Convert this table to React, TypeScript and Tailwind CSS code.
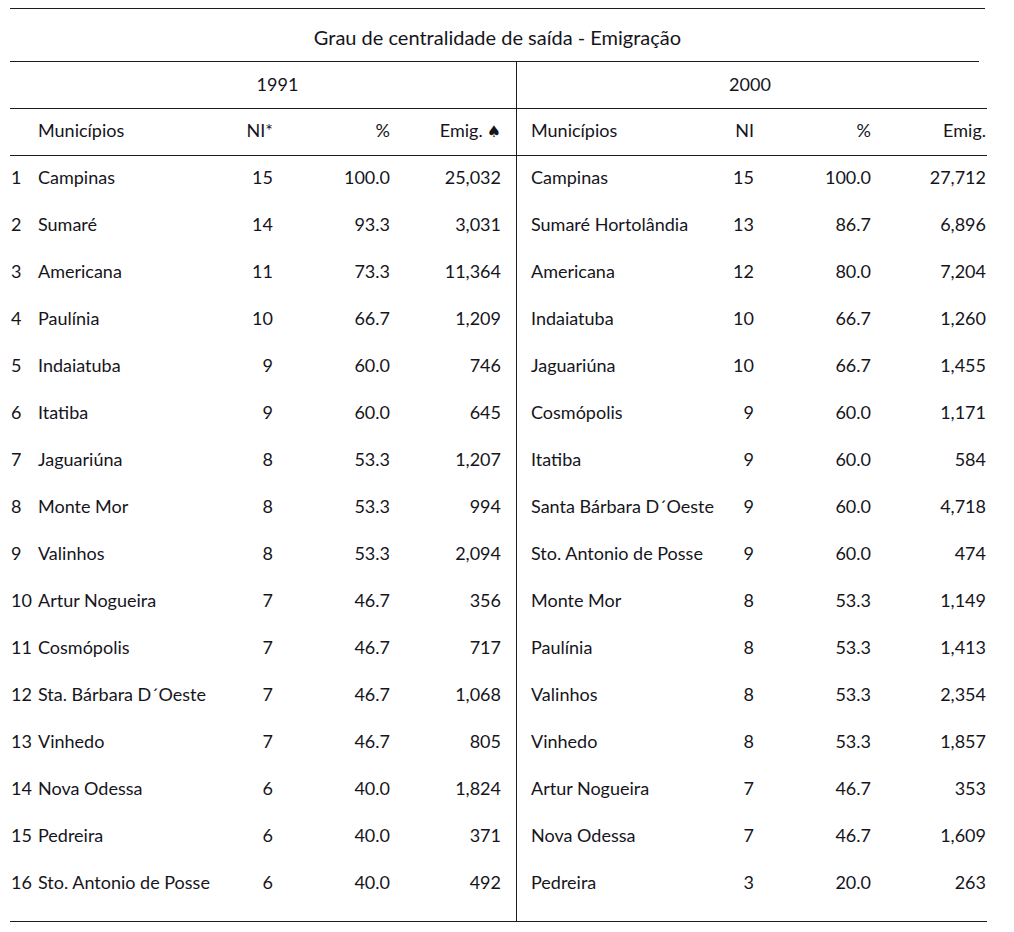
import React from "react";

const left: [string, string, string, string][] = [
  ["Campinas", "15", "100.0", "25,032"],
  ["Sumaré", "14", "93.3", "3,031"],
  ["Americana", "11", "73.3", "11,364"],
  ["Paulínia", "10", "66.7", "1,209"],
  ["Indaiatuba", "9", "60.0", "746"],
  ["Itatiba", "9", "60.0", "645"],
  ["Jaguariúna", "8", "53.3", "1,207"],
  ["Monte Mor", "8", "53.3", "994"],
  ["Valinhos", "8", "53.3", "2,094"],
  ["Artur Nogueira", "7", "46.7", "356"],
  ["Cosmópolis", "7", "46.7", "717"],
  ["Sta. Bárbara D´Oeste", "7", "46.7", "1,068"],
  ["Vinhedo", "7", "46.7", "805"],
  ["Nova Odessa", "6", "40.0", "1,824"],
  ["Pedreira", "6", "40.0", "371"],
  ["Sto. Antonio de Posse", "6", "40.0", "492"],
];

const right: [string, string, string, string][] = [
  ["Campinas", "15", "100.0", "27,712"],
  ["Sumaré Hortolândia", "13", "86.7", "6,896"],
  ["Americana", "12", "80.0", "7,204"],
  ["Indaiatuba", "10", "66.7", "1,260"],
  ["Jaguariúna", "10", "66.7", "1,455"],
  ["Cosmópolis", "9", "60.0", "1,171"],
  ["Itatiba", "9", "60.0", "584"],
  ["Santa Bárbara D´Oeste", "9", "60.0", "4,718"],
  ["Sto. Antonio de Posse", "9", "60.0", "474"],
  ["Monte Mor", "8", "53.3", "1,149"],
  ["Paulínia", "8", "53.3", "1,413"],
  ["Valinhos", "8", "53.3", "2,354"],
  ["Vinhedo", "8", "53.3", "1,857"],
  ["Artur Nogueira", "7", "46.7", "353"],
  ["Nova Odessa", "7", "46.7", "1,609"],
  ["Pedreira", "3", "20.0", "263"],
];

const LCOLS = "grid grid-cols-[28px_195px_40px_117px_111px] pr-[15px]";
const RCOLS = "grid grid-cols-[183px_40px_117px_115px] pl-[14px] pr-[1px]";

export default function App() {
  return (
    <div
      className="bg-white w-[1014px] h-[932px] pt-[8px] pl-[10px] text-[#16151c] text-[18px] leading-none"
      style={{ fontFamily: 'Lato, "Open Sans", sans-serif' }}
    >
      <div className="w-[975px] h-px bg-[#1c1b22]" />
      <div className="w-[975px] h-[52px] flex items-center justify-center pt-[3px] text-[20px]">
        Grau de centralidade de saída - Emigração
      </div>
      <div className="w-[969px] h-px bg-[#1c1b22]" />
      <div className="w-[977px] flex border-b border-[#1c1b22]">
        {/* left half */}
        <div className="w-[506px]">
          <div className="h-[47px] flex items-center justify-center pl-[28px] pb-[2px] border-b border-[#1c1b22] -mr-px">
            1991
          </div>
          <div className={`${LCOLS} h-[47px] items-center pb-[4px] border-b border-[#1c1b22] -mr-px`}>
            <span />
            <span>Municípios</span>
            <span className="text-right">NI*</span>
            <span className="text-right">%</span>
            <span className="text-right whitespace-nowrap">
              Emig.
              <span
                className="text-[16px] ml-[4px]"
                style={{ fontFamily: '"DejaVu Sans", sans-serif' }}
              >
                ♠
              </span>
            </span>
          </div>
          <div className="pb-[13px]">
            {left.map((r, i) => (
              <div key={i} className={`${LCOLS} h-[47px] items-center pb-[6px]`}>
                <span className="pl-px">{i + 1}</span>
                <span className="whitespace-nowrap">{r[0]}</span>
                <span className="text-right">{r[1]}</span>
                <span className="text-right">{r[2]}</span>
                <span className="text-right">{r[3]}</span>
              </div>
            ))}
          </div>
        </div>
        {/* right half */}
        <div className="w-[471px] border-l border-[#1c1b22]">
          <div className="h-[47px] flex items-center justify-center pr-[4px] pb-[2px] border-b border-[#1c1b22]">
            2000
          </div>
          <div className={`${RCOLS} h-[47px] items-center pb-[4px] border-b border-[#1c1b22]`}>
            <span>Municípios</span>
            <span className="text-right">NI</span>
            <span className="text-right">%</span>
            <span className="text-right">Emig.</span>
          </div>
          <div className="pb-[13px]">
            {right.map((r, i) => (
              <div key={i} className={`${RCOLS} h-[47px] items-center pb-[6px]`}>
                <span className="whitespace-nowrap">{r[0]}</span>
                <span className="text-right">{r[1]}</span>
                <span className="text-right">{r[2]}</span>
                <span className="text-right">{r[3]}</span>
              </div>
            ))}
          </div>
        </div>
      </div>
    </div>
  );
}
